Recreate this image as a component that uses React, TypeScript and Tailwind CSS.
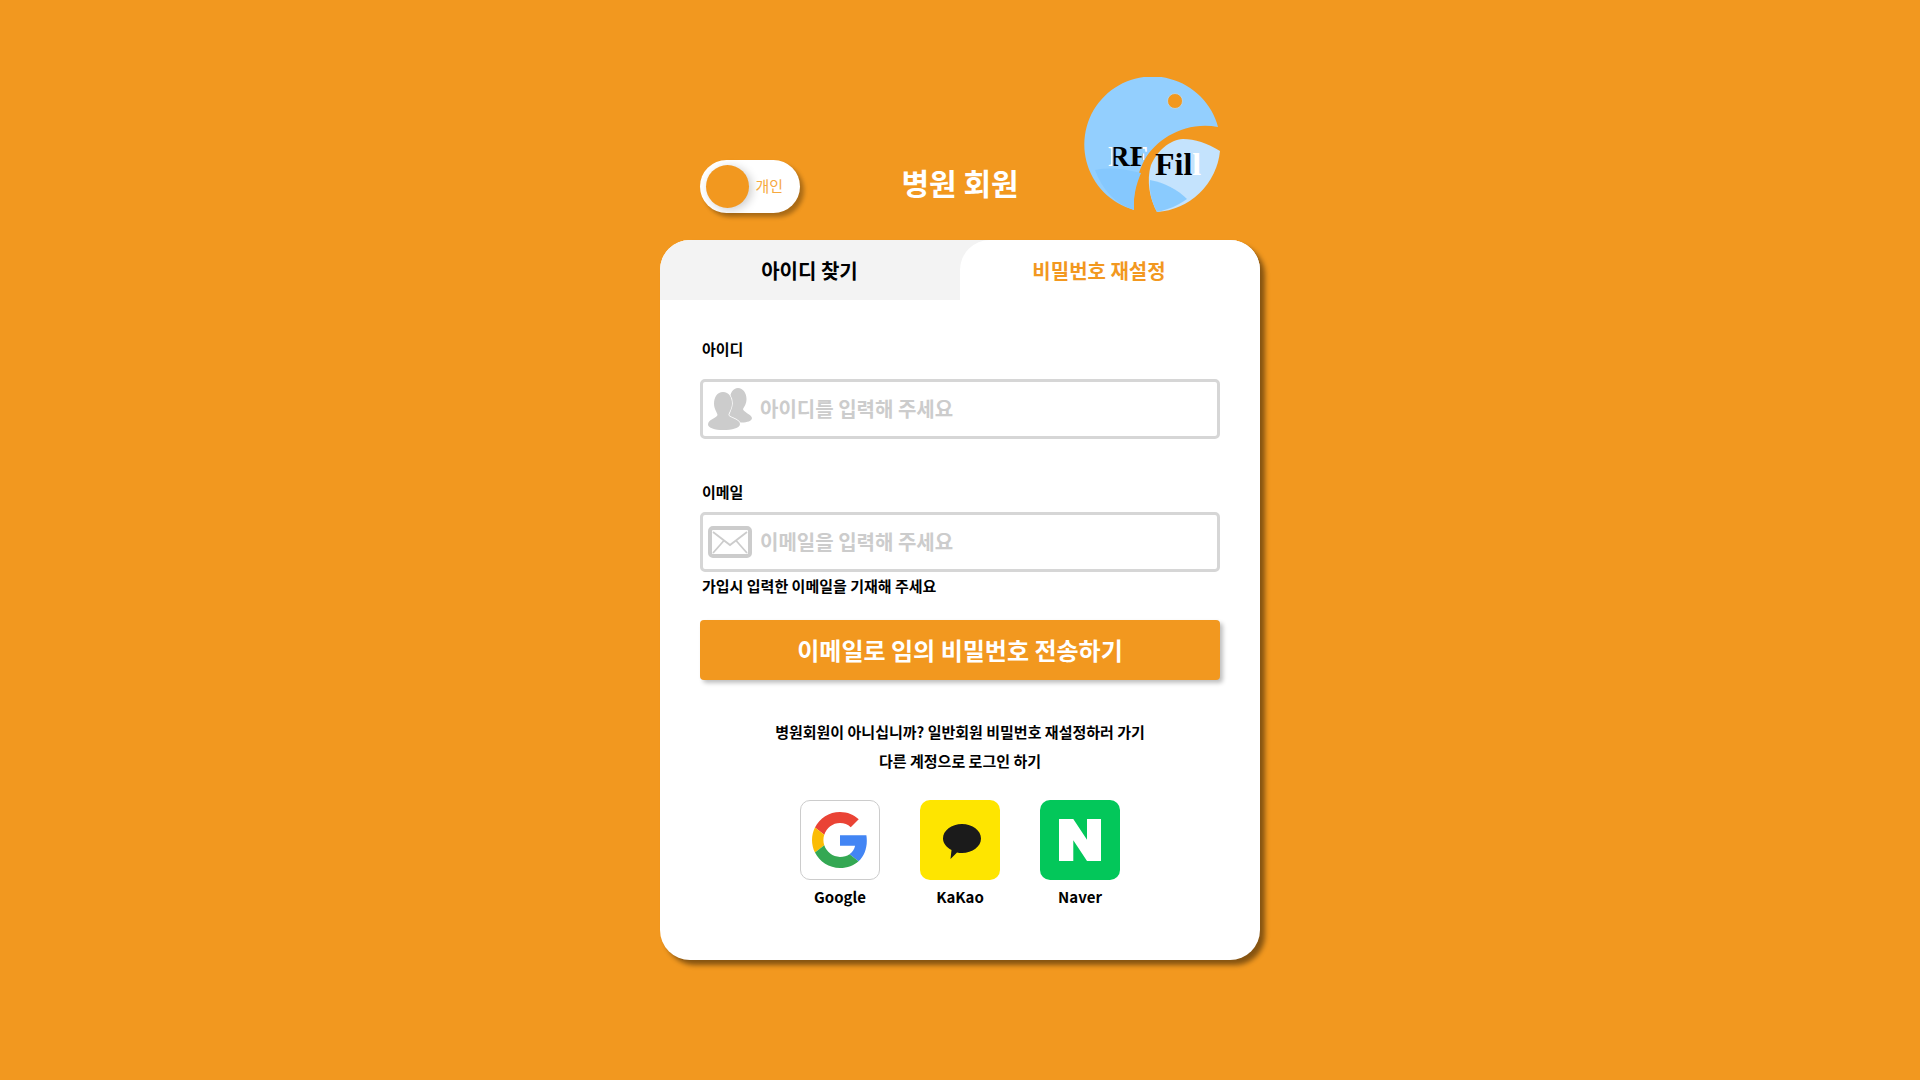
const font = "font-['Noto_Sans_CJK_KR','Noto_Sans',sans-serif]";

function Logo() {
    return (
        <svg width="136" height="136" viewBox="-1 0 136 136" className="shrink-0">
            <defs>
                <linearGradient id="rf" gradientUnits="userSpaceOnUse" x1="23" y1="0" x2="64" y2="0">
                    <stop offset="0.1" stopColor="#ffffff" />
                    <stop offset="0.16" stopColor="#000000" />
                    <stop offset="0.8" stopColor="#000000" />
                    <stop offset="0.86" stopColor="#ffffff" />
                </linearGradient>
            </defs>
            <path d="M49 133A68 68 0 1 1 133 50C100 44 72 62 60 82C52 96 48 115 49 133Z" fill="#93CFFE" />
            <path d="M10 93C25 90 40 92 56 96C51 108 48 120 49 133C30 127 17 112 10 93Z" fill="#85C8FE" />
            <path d="M135 74C122 66 110 62 98 62C84 63 72 74 66 88C61 104 65 122 72 135A68 68 0 0 0 135 74Z" fill="#C4E3FD" />
            <path d="M65 103C80 106 92 112 102 122C92 129 82 133 72 135C66 124 64 113 65 103Z" fill="#8ACBFE" />
            <circle cx="90" cy="24" r="7.5" fill="#F2981F" stroke="#B5DAF5" strokeWidth="0.8" />
            <text x="23" y="89" fontFamily="'Liberation Serif',serif" fontWeight="700" fontSize="30" fill="url(#rf)">
                RF
            </text>
            <text x="70" y="98" fontFamily="'Liberation Serif',serif" fontWeight="700" fontSize="32" fill="#000000">
                Fil<tspan fill="#ffffff">l</tspan>
            </text>
        </svg>
    );
}

function UserIcon() {
    return (
        <svg width="44" height="42" viewBox="0 0 44 42" className="shrink-0">
            <path d="M30 0C35 0 38.500 5 38.500 11C38.500 16 36 19 35 21C35 24 43 26 44 30C44 33 39 34.500 34 34.500C28 34.500 22 33 20 28C22 25 22 20 22 11C22 5 25 0 30 0Z" fill="#cccccc" />
            <path d="M15 4C21 4 24 9.500 24 15.500C24 21 21 24 20.500 27C21 30 32 31 32 36C32 40 24 42 15 42C7 42 0 40 0 36.500C0 31.500 9 30 9.500 27C9 24 6 21 6 15.500C6 9.500 9 4 15 4Z" fill="#cccccc" stroke="#ffffff" strokeWidth="1.5" paintOrder="stroke" />
        </svg>
    );
}

function MailIcon() {
    return (
        <svg width="44" height="32" viewBox="0 0 44 32" className="shrink-0">
            <rect x="2" y="2" width="40" height="28" rx="3" fill="none" stroke="#cccccc" strokeWidth="4" />
            <path d="M5 6L22 19L39 6M5 27L16 14.500M39 27L28 14.500" fill="none" stroke="#cccccc" strokeWidth="1.800" />
        </svg>
    );
}

function GoogleIcon() {
    return (
        <svg width="56" height="58" viewBox="0 0 48 48">
            <path fill="#EA4335" d="M24 9.5c3.54 0 6.71 1.22 9.21 3.6l6.85-6.85C35.9 2.38 30.47 0 24 0 14.62 0 6.51 5.38 2.56 13.22l7.98 6.19C12.43 13.72 17.74 9.5 24 9.5z" />
            <path fill="#4285F4" d="M46.98 24.55c0-1.57-.15-3.09-.38-4.55H24v9.02h12.94c-.58 2.96-2.26 5.48-4.78 7.18l7.73 6c4.51-4.18 7.09-10.36 7.09-17.65z" />
            <path fill="#FBBC05" d="M10.53 28.59c-.48-1.45-.76-2.99-.76-4.59s.27-3.14.76-4.59l-7.98-6.19C.92 16.46 0 20.12 0 24c0 3.88.92 7.54 2.56 10.78l7.97-6.19z" />
            <path fill="#34A853" d="M24 48c6.48 0 11.93-2.13 15.89-5.81l-7.73-6c-2.15 1.45-4.92 2.3-8.16 2.3-6.26 0-11.57-4.22-13.47-9.91l-7.98 6.19C6.51 42.62 14.62 48 24 48z" />
        </svg>
    );
}

function KakaoIcon() {
    return (
        <svg width="40" height="38" viewBox="0 0 40 38" className="mt-[5px] ml-[3px]">
            <path d="M20 1C30.5 1 39 7.5 39 15.5C39 23.5 30.5 30 20 30C18 30 16.5 29.8 15 29.4L8.5 36L9.5 27C4.5 24.5 1 20.300 1 15.500C1 7.500 9.500 1 20 1Z" fill="#1b1b1b" />
        </svg>
    );
}

function NaverIcon() {
    return (
        <svg width="42" height="42" viewBox="0 0 42 42">
            <path d="M0 0H14.300L28 20.700V0H42V42H28L14.300 21.300V42H0Z" fill="#ffffff" />
        </svg>
    );
}

function Field(props: { label: string; placeholder: string; icon: React.ReactNode; gap: string }) {
    return (
        <div className="flex flex-col">
            <label className="h-[18px] pl-0.5 text-[15px] leading-[18px] font-bold text-black">{props.label}</label>
            <div className={`${props.gap} flex h-[60px] items-center gap-2 rounded-[5px] border-[3px] border-[#d6d6d6] pl-[5px]`}>
                {props.icon}
                <span className="text-[20px] font-bold text-[#cccccc]">{props.placeholder}</span>
            </div>
        </div>
    );
}

const socials = [
    { name: "Google", box: "border border-[#cccccc] bg-white", icon: <GoogleIcon /> },
    { name: "KaKao", box: "bg-[#FEE500]", icon: <KakaoIcon /> },
    { name: "Naver", box: "bg-[#03C75A]", icon: <NaverIcon /> },
];

export default function App() {
    return (
        <div className={`${font} flex min-h-screen flex-col items-center bg-[#F2981F] pt-[77px]`}>
            <header className="grid h-[136px] w-[520px] grid-cols-[1fr_auto_1fr] items-end">
                <div className="flex h-[53px] w-[100px] items-center justify-between rounded-full bg-white pr-[17px] pl-[6px] shadow-[4px_4px_4px_rgba(0,0,0,0.3)]">
                    <div className="h-[43px] w-[43px] rounded-full bg-[#F2981F] shadow-[3px_2px_10px_rgba(0,0,0,0.2)]" />
                    <span className="text-[15px] text-[#F6A93F]">개인</span>
                </div>
                <h1 className="mb-[8px] text-[30px] font-bold text-white">병원 회원</h1>
                <div className="flex justify-end">
                    <Logo />
                </div>
            </header>

            <main className="mt-[27px] flex h-[720px] w-[600px] flex-col overflow-hidden rounded-[30px] bg-white shadow-[5px_5px_5px_rgba(0,0,0,0.45)]">
                <div className="flex h-[60px] bg-[#f3f3f3]">
                    <div className="flex w-[300px] items-center justify-center pt-[2px] pr-px text-[20px] font-bold text-black">아이디 찾기</div>
                    <div className="flex w-[300px] items-center justify-center rounded-t-[30px] bg-white pt-[2px] pr-[22px] text-[20px] font-bold text-[#F2981F]">비밀번호 재설정</div>
                </div>

                <div className="flex flex-col px-10 pt-10">
                    <Field label="아이디" placeholder="아이디를 입력해 주세요" icon={<UserIcon />} gap="mt-[21px]" />
                    <div className="mt-[44px]">
                        <Field label="이메일" placeholder="이메일을 입력해 주세요" icon={<MailIcon />} gap="mt-[11px]" />
                    </div>
                    <p className="mt-[3px] pl-0.5 text-[15px] font-bold text-black">가입시 입력한 이메일을 기재해 주세요</p>
                    <button className="mt-[22px] h-[60px] rounded-[4px] bg-[#F2981F] text-[24px] font-bold text-white shadow-[3px_3px_4px_rgba(0,0,0,0.25)]">
                        이메일로 임의 비밀번호 전송하기
                    </button>
                    <div className="mt-[37px] text-center text-[15px] leading-[29px] font-bold text-black">
                        <p>병원회원이 아니십니까? 일반회원 비밀번호 재설정하러 가기</p>
                        <p>다른 계정으로 로그인 하기</p>
                    </div>
                    <div className="mt-[25px] flex justify-center gap-10">
                        {socials.map((s) => (
                            <div key={s.name} className="flex flex-col items-center">
                                <div className={`flex h-20 w-20 items-center justify-center rounded-[10px] ${s.box}`}>{s.icon}</div>
                                <span className="mt-[6px] text-[15px] font-bold text-black">{s.name}</span>
                            </div>
                        ))}
                    </div>
                </div>
            </main>
        </div>
    );
}
